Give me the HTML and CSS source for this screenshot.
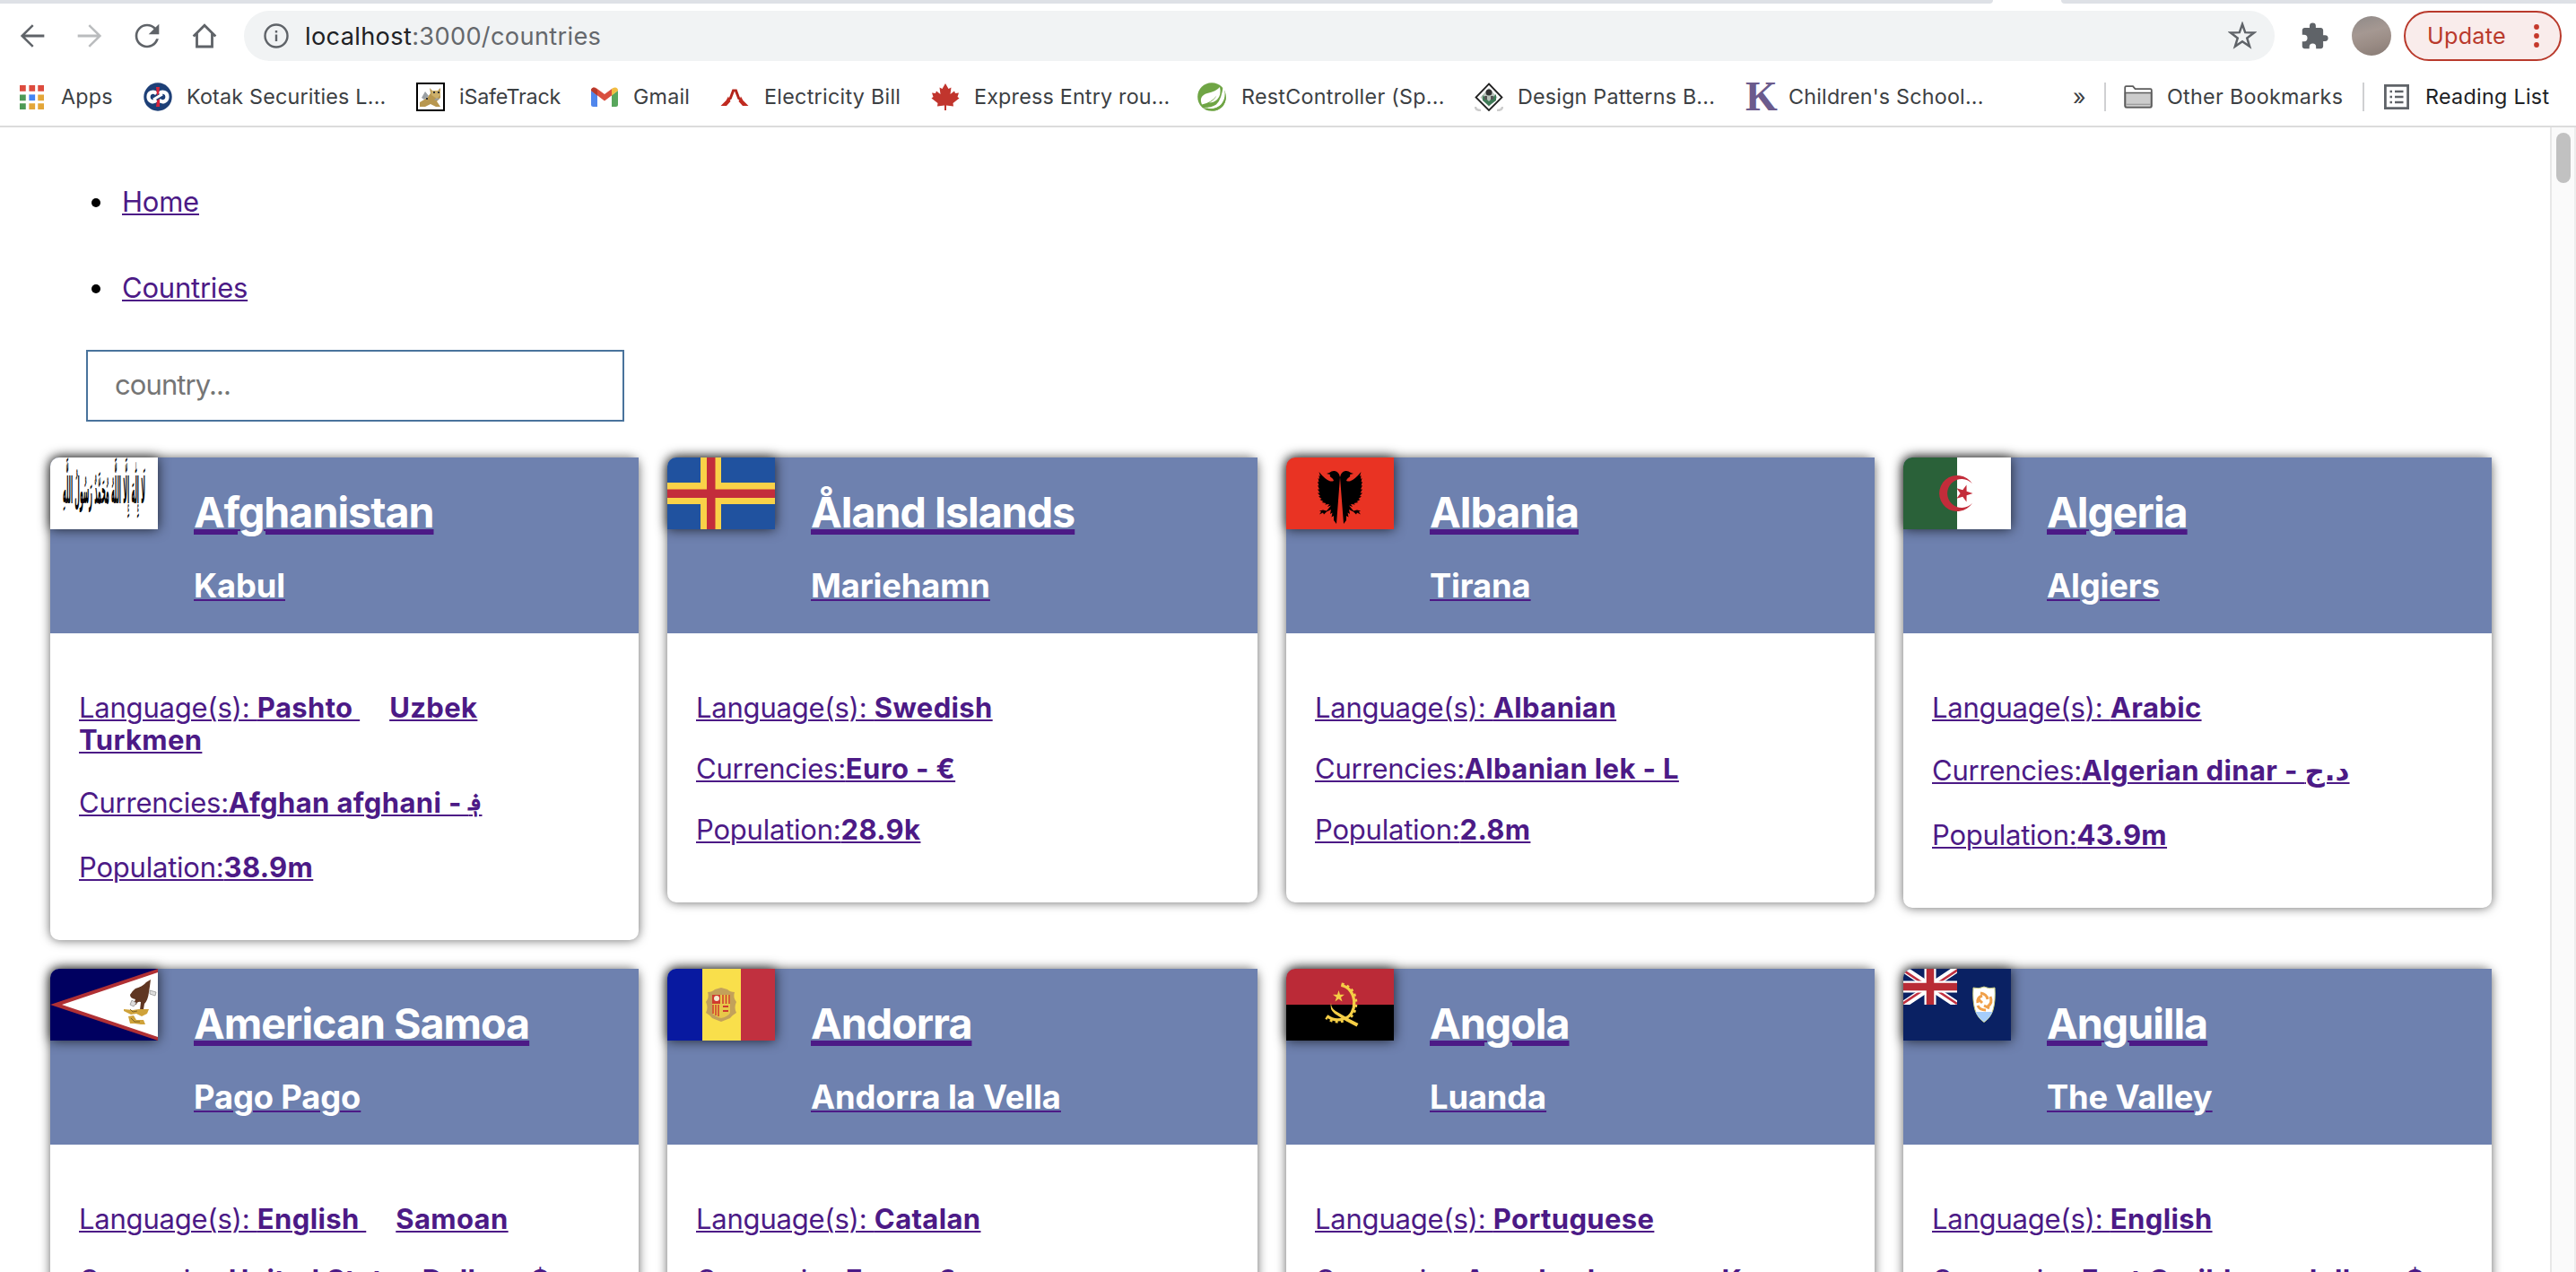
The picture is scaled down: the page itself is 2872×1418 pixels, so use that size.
FILE: index.html
```html
<!DOCTYPE html>
<html lang="en">
<head>
<meta charset="utf-8">
<title>Countries</title>
<link rel="stylesheet" href="styles.css">
</head>
<body>
<header class="browser">
  <div class="tabstrip"><span class="tab-left"></span><span class="tab-right"></span></div>
  <div class="toolbar">
    <svg class="nav-icon" viewBox="0 0 24 24"><path d="M20 11.15H7.2l5.75-5.8L11.9 4.3 4.1 12l7.8 7.7 1.05-1.05-5.75-5.8H20z"/></svg>
    <svg class="nav-icon nav-icon-off" viewBox="0 0 24 24"><path d="M4 11.15h12.8l-5.75-5.8L12.1 4.3l7.8 7.7-7.8 7.7-1.05-1.05 5.75-5.8H4z"/></svg>
    <svg class="nav-icon" viewBox="0 0 24 24"><path d="M17.65 6.35C16.2 4.9 14.21 4 12 4c-4.42 0-7.99 3.58-7.99 8s3.57 8 7.99 8c3.73 0 6.84-2.55 7.73-6h-1.7c-.85 2.6-3.24 4.4-6.03 4.4-3.53 0-6.4-2.87-6.4-6.4S8.470 5.600 12 5.600c1.77 0 3.35.73 4.5 1.9L13 11h7V4z"/></svg>
    <svg class="nav-icon" viewBox="0 0 24 24"><path d="M4.600 12.300 12 4.900l7.400 7.400M6.900 10.500v8.700h10.200v-8.700" fill="none" stroke="#5f6368" stroke-width="1.7"/></svg>
    <div class="omnibox">
      <svg class="info-icon" viewBox="0 0 28 28"><circle cx="14" cy="14" r="12.500" fill="none" stroke="#5f6368" stroke-width="2.400"/><path d="M12.800 12.500h2.400V20h-2.400zM12.800 8h2.400v2.500h-2.400z" fill="#5f6368"/></svg>
      <span class="url">localhost<span class="url-rest">:3000/countries</span></span>
      <svg class="star-icon" viewBox="0 0 30 30"><path d="M15 2.800 18 11.400 27.200 11.700 19.900 17.300 22.600 26.100 15 20.900 7.400 26.100 10.100 17.300 2.800 11.700 12 11.400z" fill="none" stroke="#5f6368" stroke-width="2.300"/></svg>
    </div>
    <svg class="puzzle-icon" viewBox="0 0 24 24"><path d="M20.500 11H19V7c0-1.100-.9-2-2-2h-4V3.500a2.500 2.500 0 0 0-5 0V5H4c-1.100 0-1.990.9-1.990 2v3.800H3.500a2.700 2.700 0 0 1 0 5.400H2V20c0 1.100.9 2 2 2h3.800v-1.500a2.700 2.700 0 0 1 5.400 0V22H17c1.100 0 2-.9 2-2v-4h1.500a2.500 2.500 0 0 0 0-5z" fill="#5f6368"/></svg>
    <span class="avatar"></span>
    <div class="update">Update
      <svg class="dots" viewBox="0 0 6 26"><circle cx="3" cy="3" r="2.900"/><circle cx="3" cy="13" r="2.900"/><circle cx="3" cy="23" r="2.900"/></svg>
    </div>
  </div>
  <div class="bookmarks">
    <div class="bm bm-apps"><svg viewBox="0 0 26 26"><path d="M0 0h6.500v6.500H0zM10 0h6.500v6.500H10zM19.500 0H26v6.500h-6.500z" fill="#dd4b3e"/><path d="M0 10h6.500v6.500H0zM0 19.500h6.500V26H0z" fill="#4e9a56"/><path d="M10 19.500h6.500V26H10zM19.500 10H26v6.500h-6.500zM19.500 19.500H26V26h-6.500z" fill="#e3a639"/><path d="M10 10h6.500v6.500H10z" fill="#4285f4"/></svg><span>Apps</span></div>
    <div class="bm"><svg viewBox="0 0 32 32"><circle cx="16" cy="16" r="15.700" fill="#1d3f77"/><path d="M14.500 12.500C11 9 5.500 11 5.500 16s5.500 7 9 3.500M17.500 12.500C21 9 26.500 11 26.500 16s-5.500 7-9 3.500" fill="none" stroke="#fff" stroke-width="4.200"/><path d="M11 19 21 13" stroke="#fff" stroke-width="3"/><path d="M14 5h4l-.8 7.500-2.200 2zM14 27h4v-9l-3 2z" fill="#d8243c"/></svg><span>Kotak Securities L...</span></div>
    <div class="bm"><svg viewBox="0 0 32 32"><path d="M1 1h30v30H1z" fill="#fff" stroke="#000" stroke-width="2"/><path d="M4 27V22l5-3 4-3 3-4-1-6 3 3h6l3-3v11l-4 4 4 6h-5l-6-3-6 3z" fill="#b8974f"/><path d="M6 17 10 10l4 5-5 4zM20 20l3-4 3 3z" fill="#9a9fa3"/><path d="M17 9h10v5l-4 4-6-4z" fill="#cdb06a"/><path d="M19 11h2M24 11h2M11 18h2" stroke="#333" stroke-width="2"/></svg><span class="tight">iSafeTrack</span></div>
    <div class="bm"><svg viewBox="0 0 32 32"><path d="M1 9v15.500Q1 27 3.500 27H8V14z" fill="#5086ec"/><path d="M24 14v13h4.500Q31 27 31 24.500V9z" fill="#58a65c"/><path d="M1 9q0-3.500 3.500-3.500 1.500 0 3 1.200L16 13l8.500-6.300V14L16 20.500 1 9z" fill="#d94f3f"/><path d="M24 7q1.500-1.500 3.500-1.500Q31 5.500 31 9l-7 5.500z" fill="#f1bd42"/><path d="M1 9q0-3 3-3.500L8 8v6.500z" fill="#b5392c"/></svg><span>Gmail</span></div>
    <div class="bm"><svg viewBox="0 0 32 32"><path d="M8.500 21 13.500 7.500h5L23.500 21l-4-2.500L16 9.500 12.500 18.500z" fill="#b3241b"/><path d="M9 15.500 6.500 20 .5 26h6.500l4.500-5zM23 15.500 25.500 20l6 6H25l-4.500-5z" fill="#c02a20"/></svg><span class="shift">Electricity Bill</span></div>
    <div class="bm"><svg viewBox="0 0 32 32"><path d="M16 1 19.500 7 22.500 5.500 21.500 13 26 9.500 27 12 31 11.500 29.500 16 31.500 17.500 24.500 23 25 26.500 17 25.500V31h-2v-5.500L7 26.500 7.500 23 .5 17.500 2.500 16 1 11.500 5 12 6 9.500 10.500 13 9.500 5.500 12.500 7z" fill="#c1352d"/></svg><span>Express Entry rou...</span></div>
    <div class="bm"><svg viewBox="0 0 32 32"><circle cx="16" cy="16" r="15.800" fill="#6fa545"/><path d="M29 2q4 14-2 22-6 7-17 4.500l-5-.5q10 .5 16-3.500 6-5 8-22.500z" fill="#fff"/><path d="M5 24.500Q1 15 11 12q10-2 14-7 2 9-3 14-4 3.500-9 3.500 6-3 8.500-8-6 8-16.500 10z" fill="#fff"/><path d="M10 28.500q9 2.500 16-3.500 5-6 5.500-12l.3 5q-1 9-9 12.500-7 2.500-12.800-2z" fill="#6fa545"/></svg><span class="shift">RestController (Sp...</span></div>
    <div class="bm"><svg viewBox="0 0 32 32"><path d="M1 27q0 4 6 4M31 27q0 4-6 4" fill="none" stroke="#ccc" stroke-width="2.500"/><path d="M16 1.500 30.500 16.500 16 31 1.500 16.500z" fill="#fff" stroke="#222" stroke-width="1.800"/><path d="M16 6 25.500 16.500 16 27 6.500 16.500z" fill="#b9c3bb"/><path d="M9 14l7 7 8-8v7l-8 6-7-6z" fill="#3f7a57"/><circle cx="16" cy="11" r="3.500" fill="#333"/><path d="M11 15h3v4h-3zM18 15h3v4h-3z" fill="#555"/></svg><span>Design Patterns B...</span></div>
    <div class="bm"><span class="k-icon">K</span><span>Children's School...</span></div>
    <span class="more">»</span>
    <div class="bm bm-folder"><svg viewBox="0 0 32 26"><path d="M1.200 23V2.500q0-1.300 1.300-1.300h7.500l2.500 3h17q1.300 0 1.300 1.300V23q0 1.700-1.700 1.700H2.900q-1.700 0-1.700-1.700z" fill="#fff" stroke="#5c5c5c" stroke-width="1.800"/><path d="M1.500 8.500h29V23q0 1.500-1.500 1.500H3Q1.500 24.500 1.500 23z" fill="#ccc" stroke="#5c5c5c" stroke-width="1.600"/><path d="M2.500 21.300h27" stroke="#999" stroke-width="1.200"/></svg><span>Other Bookmarks</span></div>
    <div class="bm bm-reading"><svg viewBox="0 0 28 28"><path d="M1.400 1.400h25.200v25.200H1.400z" fill="none" stroke="#5f6368" stroke-width="2.800"/><path d="M6.500 8H9M6.500 14H9M6.500 20H9M12 8h9.500M12 14h9.500M12 20h9.500" stroke="#5f6368" stroke-width="2.600"/></svg><span>Reading List</span></div>
  </div>
</header>
<div class="viewport">
<main class="page">
  <ul class="menu">
    <li><a href="#">Home</a></li>
    <li><a href="#">Countries</a></li>
  </ul>
  <input class="search" type="text" placeholder="country...">
  <section class="grid">
    <a class="card" href="#">
      <div class="card-head">
        <svg class="flag" viewBox="0 0 120 80"><path d="M0 0h120v80H0z" fill="#fff"/><g transform="translate(14 51) scale(1 2.300)"><text class="script" x="0" y="0" textLength="92" lengthAdjust="spacingAndGlyphs" direction="rtl" text-anchor="end">لَا إِلَٰهَ إِلَّا اللَّٰهُ مُحَمَّدٌ رَسُولُ اللَّٰهِ</text></g></svg>
        <div><h2>Afghanistan</h2><h3>Kabul</h3></div>
      </div>
      <div class="card-body">
        <p>Language(s): <strong class="lang">Pashto&nbsp;</strong><strong>Uzbek</strong><br><strong>Turkmen</strong></p>
        <p class="tall">Currencies:<strong>Afghan afghani - <span class="afghani">؋</span></strong></p>
        <p>Population:<strong>38.9m</strong></p>
      </div>
    </a>
    <a class="card" href="#">
      <div class="card-head">
        <svg class="flag" viewBox="0 0 120 80"><path d="M0 0h120v80H0z" fill="#20529f"/><path d="M37 0h23v80H37zM0 28h120v24H0z" fill="#f9d248"/><path d="M44 0h9.500v80H44zM0 35.500h120v9.500H0z" fill="#c32d3b"/></svg>
        <div><h2>Åland Islands</h2><h3>Mariehamn</h3></div>
      </div>
      <div class="card-body">
        <p>Language(s): <strong>Swedish</strong></p>
        <p>Currencies:<strong>Euro - €</strong></p>
        <p>Population:<strong>28.9k</strong></p>
      </div>
    </a>
    <a class="card" href="#">
      <div class="card-head">
        <svg class="flag" viewBox="0 0 120 80"><path d="M0 0h120v80H0z" fill="#e93323"/><g id="half"><path d="M60 22q-1-6-6-7-3-.5-6 2l-3 1 4 1q-1 2 1.500 3.500 2 1 2.500 3.500-3 1-5 0-5-2-11.500-10l1.500 5-1.500-1 .5 4-1.500-1 1 4.500-1.500-.5 1.500 4.500-1.500-.5 2 4.500-2 0 2.500 4-2.500 0 3 3.500-2 .5 3.500 2.500-2 1 4 2-2 1 5 1-1.500 1.500 5-.5-2 3 4-1.500-5 6-4-1-4 1 2 1-2 3 4-2 1 2 3-3 5-2.500-1 5 2.500-1.500-1 5 2.500-1.500 0 5 3 4z"/></g><use href="#half" transform="matrix(-1 0 0 1 120 0)"/></svg>
        <div><h2>Albania</h2><h3>Tirana</h3></div>
      </div>
      <div class="card-body">
        <p>Language(s): <strong>Albanian</strong></p>
        <p>Currencies:<strong>Albanian lek - L</strong></p>
        <p>Population:<strong>2.8m</strong></p>
      </div>
    </a>
    <a class="card" href="#">
      <div class="card-head">
        <svg class="flag" viewBox="0 0 120 80"><path d="M0 0h60v80H0z" fill="#2a6139"/><path d="M60 0h60v80H60z" fill="#fff"/><path d="M77 29.300A20 20 0 1 0 77 50.700 16 16 0 1 1 77 29.300z" fill="#c32c3a"/><path d="M77.500 40 70.600 42.300 70.500 49.500 66.200 43.700 59.400 45.800 63.600 40 59.400 34.200 66.200 36.300 70.500 30.500 70.600 37.700z" fill="#c32c3a"/></svg>
        <div><h2>Algeria</h2><h3>Algiers</h3></div>
      </div>
      <div class="card-body">
        <p>Language(s): <strong>Arabic</strong></p>
        <p class="tall">Currencies:<strong>Algerian dinar - <span class="arabic">د.ج</span></strong></p>
        <p>Population:<strong>43.9m</strong></p>
      </div>
    </a>
    <a class="card" href="#">
      <div class="card-head">
        <svg class="flag" viewBox="0 0 120 80"><path d="M0 0h120v80H0z" fill="#000060"/><path d="M0 40 120 0v80z" fill="#b03034"/><path d="M13 40 120 4v72z" fill="#fff"/><path d="M112 12q-1 8-2 14-1 9-5 13l-1 6-4 1 1-9q-4-1-5 3l-3-1 2-5q-6-1-6-5 2-4 6-7 8-2 12-7z" fill="#5f3622"/><path d="M111 24l7 2-1 4-6-2zM91 35l5 3-3 4-4-2z" fill="#ddd" stroke="#888" stroke-width=".7"/><path d="M82 45l10 1 7-1 11 0-2 5-6 3-6-3-6 1-8-4zM87 53l6-1 3 5 8 0 2 5-5 0-7-1-5 0z" fill="#cfa23a"/><path d="M89 45l3 3 5-1M90 55l4 4 6 0" fill="none" stroke="#6d5420" stroke-width=".8"/></svg>
        <div><h2>American Samoa</h2><h3>Pago Pago</h3></div>
      </div>
      <div class="card-body">
        <p>Language(s): <strong class="lang">English&nbsp;</strong><strong>Samoan</strong></p>
        <p>Currencies:<strong>United States Dollar - $</strong></p>
        <p>Population:<strong>55.2k</strong></p>
      </div>
    </a>
    <a class="card" href="#">
      <div class="card-head">
        <svg class="flag" viewBox="0 0 120 80"><path d="M0 0h39v80H0z" fill="#0819a0"/><path d="M39 0h43v80H39z" fill="#f9df4b"/><path d="M82 0h38v80H82z" fill="#c1303f"/><path d="M45 26q5 0 8-3l7-2 7 2q3 3 8 3-2 6 2 11-3 6 0 12-5 3-7 6l-10 4-10-4q-2-3-7-6 3-6 0-12 4-5 2-11z" fill="#c3a15a"/><path d="M50 29h20v20q-2 4-10 6-8-2-10-6z" fill="#e8c84a"/><path d="M50 29h9v10h-9z" fill="#cf3b2e"/><circle cx="55" cy="33" r="3" fill="#f4ead0"/><path d="M62 29v10M65.500 29v10M69 29v10M51 40v10M54 40v12M57 40v13" stroke="#cf3b2e" stroke-width="1.500"/><path d="M62 42h6M62 47h6" stroke="#cf3b2e" stroke-width="2"/></svg>
        <div><h2>Andorra</h2><h3>Andorra la Vella</h3></div>
      </div>
      <div class="card-body">
        <p>Language(s): <strong>Catalan</strong></p>
        <p>Currencies:<strong>Euro - €</strong></p>
        <p>Population:<strong>77.3k</strong></p>
      </div>
    </a>
    <a class="card" href="#">
      <div class="card-head">
        <svg class="flag" viewBox="0 0 120 80"><path d="M0 0h120v40H0z" fill="#bb2a37"/><path d="M0 40h120v40H0z"/><path d="M61.500 18.500C80 22 80 52 64.500 55.500 58 58 51 57 45.500 52.500" fill="none" stroke="#f5ce46" stroke-width="3.200"/><path d="M61.500 17.500C82 21 82 53 65 57 58 59.500 51 59 44.500 54" fill="none" stroke="#f5ce46" stroke-width="4" stroke-dasharray="2.800 3.200"/><path d="M50 38q0 6 5 9 13 8 25.500 14l-2 3.500Q65 58 54 50q-6-5-4-12z" fill="#f5ce46"/><path d="M58.500 24 60 28.700h5l-4 3 1.500 4.800-4-3-4 3 1.500-4.800-4-3h5z" fill="#f5ce46"/></svg>
        <div><h2>Angola</h2><h3>Luanda</h3></div>
      </div>
      <div class="card-body">
        <p>Language(s): <strong>Portuguese</strong></p>
        <p>Currencies:<strong>Angolan kwanza - Kz</strong></p>
        <p>Population:<strong>32.9m</strong></p>
      </div>
    </a>
    <a class="card" href="#">
      <div class="card-head">
        <svg class="flag" viewBox="0 0 120 80"><path d="M0 0h120v80H0z" fill="#0a2163"/><svg width="60" height="40" viewBox="0 0 60 40"><path d="M0 0 60 40M60 0 0 40" stroke="#fff" stroke-width="8"/><path d="M-1 1 30 21.500M29 18.500l31 20.500M61 1 30 21.500M30 18.500-1 39" stroke="#c03040" stroke-width="2.600"/><path d="M30 0v40M0 20h60" stroke="#fff" stroke-width="13"/><path d="M30 0v40M0 20h60" stroke="#b92c36" stroke-width="8.500"/></svg><path d="M78 21q6 2 12-1 6 3 12 1 1 15-2 25-3 9-10 13.500Q83 55 80 46q-3-10-2-25z" fill="#fff" stroke="#c9cc7c" stroke-width="1"/><path d="M80.500 48h19q-3 7-9.500 11-6.500-4-9.500-11z" fill="#a5cdfb"/><path d="M86 27q7 1 8 7M97 31q3 7-3 11M92 46q-7 0-9-5M83 38q-1-6 5-8M96 44l-6-3M84 34l4 4" fill="none" stroke="#f0a04a" stroke-width="3"/></svg>
        <div><h2>Anguilla</h2><h3>The Valley</h3></div>
      </div>
      <div class="card-body">
        <p>Language(s): <strong>English</strong></p>
        <p>Currencies:<strong>East Caribbean dollar - $</strong></p>
        <p>Population:<strong>13.5k</strong></p>
      </div>
    </a>
  </section>
</main>
<div class="scrollbar"><span class="thumb"></span></div>
</div>
</body>
</html>
```
FILE: styles.css
```css
* { box-sizing: border-box; }
body {
  margin: 0;
  height: 1418px;
  overflow: hidden;
  display: flex;
  flex-direction: column;
  background: #fff;
  color: #000;
  font-family: Inter, "Liberation Sans", sans-serif;
}

/* browser chrome */
.browser { flex: none; height: 142px; border-bottom: 2px solid #dcdcdc; background: #fff; }
.tabstrip { height: 4px; display: flex; justify-content: space-between; }
.tab-left { width: 2222px; background: #dee1e6; border-bottom-right-radius: 6px; }
.tab-right { width: 574px; background: #dee1e6; border-bottom-left-radius: 6px; }
.toolbar { height: 72px; padding: 0 16px; display: flex; align-items: center; }
.nav-icon { flex: none; width: 40px; height: 40px; margin-right: 24px; fill: #5f6368; }
.nav-icon-off { fill: #babcbe; }
.omnibox {
  flex: none;
  width: 2264px;
  height: 56px;
  padding: 0 20px 0 22px;
  border-radius: 28px;
  background: #f1f3f4;
  display: flex;
  align-items: center;
}
.info-icon { width: 28px; height: 28px; margin-right: 18px; }
.url { flex: 1; font-size: 27.2px; letter-spacing: .33px; color: #202124; }
.url-rest { color: #65686c; }
.star-icon { width: 32px; height: 32px; }
.puzzle-icon { flex: none; width: 33px; height: 33px; margin: 0 25px 0 28px; }
.avatar {
  flex: none;
  width: 44px;
  height: 44px;
  margin-right: 14px;
  border-radius: 50%;
  background: linear-gradient(165deg, #8f8a88 0%, #a59892 40%, #9b8d86 65%, #877a74 100%);
}
.update {
  width: 176px;
  height: 56px;
  padding: 0 23px 0 24px;
  border: 2px solid #b93a2c;
  border-radius: 28px;
  background: #f9eceb;
  color: #b93a2c;
  font-size: 25.2px;
  letter-spacing: .24px;
  display: flex;
  align-items: center;
  justify-content: space-between;
}
.dots { width: 6px; height: 26px; fill: #c5392b; }

.bookmarks {
  height: 64px;
  padding-left: 22px;
  display: grid;
  grid-template-columns: 138px 304px 194px 145px 235px 297px 309px 302px 365px 35px 288px 1fr;
  align-items: center;
  font-size: 23.3px;
  letter-spacing: .2px;
  color: #3c4043;
}
.bm { display: flex; align-items: center; white-space: nowrap; }
.bm span, .more { margin-top: -1px; }
.bm svg { flex: none; width: 32px; height: 32px; margin-right: 16px; }
.bm-apps svg { width: 27px; height: 27px; margin-right: 19px; }
.tight { letter-spacing: -.19px; }
.bm .shift { margin-left: 1px; letter-spacing: .28px; }
.k-icon {
  width: 32px;
  margin-right: 16px;
  font: bold 46px/32px "Liberation Serif", serif;
  letter-spacing: -2px;
  color: #6b5b8c;
}
.more { font-size: 25px; }
.bm-folder, .bm-reading { height: 32px; border-left: 2px solid #cfd0d2; }
.bm-folder svg { width: 32px; height: 26px; margin-left: 20px; margin-right: 16px; }
.bm-reading svg { width: 28px; height: 28px; margin-left: 22px; margin-right: 18px; }
.bm-folder, .bm-reading { letter-spacing: .3px; }
.bm-reading { color: #202124; }

/* page */
.viewport { flex: 1; min-height: 0; display: flex; overflow: hidden; }
.page { flex: 1; overflow: hidden; font-size: 31px; line-height: 36px; letter-spacing: -.22px; }
.scrollbar {
  width: 29px;
  padding: 6px 4px 0 5px;
  border-left: 2px solid #e7e7e7;
  border-right: 2px solid #ededed;
  background: #fafafa;
}
.thumb { display: block; width: 16px; height: 56px; border-radius: 8px; background: #c1c1c1; }
a { color: #4c1a86; text-decoration: underline 2px; text-underline-offset: 2px; }
.menu { margin: 65px 0 51px; padding-left: 129px; display: flex; flex-direction: column; gap: 60px; }
.menu li { padding-left: 7px; }
.search {
  display: block;
  width: 600px;
  height: 80px;
  margin-left: 96px;
  padding: 0 30px 3px;
  border: 2px solid #49739c;
  background: #fff;
  font: 31px Inter, sans-serif;
  letter-spacing: -.9px;
}
.search::placeholder { color: #757575; }
.grid {
  margin: 40px 64px 0 56px;
  display: grid;
  grid-template-columns: 656px 658px 656px 656px;
  gap: 32px;
  align-items: start;
}
.card { display: block; border-radius: 10px; background: #fff; box-shadow: 0 0 12px rgba(0, 0, 0, .6); }
.card-head {
  height: 196px;
  background: #6e81af;
  border-top-left-radius: 10px;
  display: flex;
  align-items: flex-start;
  gap: 40px;
}
.flag { flex: none; width: 120px; height: 80px; border-top-left-radius: 10px; box-shadow: 0 0 14px rgba(0, 0, 0, .75); }
.script { font: bold 18px "DejaVu Sans", sans-serif; fill: #000; }
.card h2 {
  margin: 33px 0 32px;
  font-size: 46.6px;
  line-height: 56px;
  letter-spacing: -1px;
  text-decoration: underline 4px #4c1a86;
  text-underline-offset: 4px;
}
.card h3 {
  margin: 0;
  font-size: 36.3px;
  line-height: 44px;
  letter-spacing: -.12px;
  text-decoration: underline 2px #4c1a86;
  text-underline-offset: 2px;
}
.card h2, .card h3 { width: fit-content; color: #fff; }
.card-body { padding: 65px 32px 63px; }
.card p { margin: 0 0 32px; }
.card p:last-child { margin: 0; }
.card p.tall { height: 42px; padding-top: 2px; }
.card strong { letter-spacing: .36px; }
.lang { margin-right: 33px; }
.arabic { font-family: "DejaVu Sans", sans-serif; font-size: 31px; line-height: 0; letter-spacing: 0; }
.afghani { font-family: "DejaVu Sans", sans-serif; font-size: 26px; line-height: 0; letter-spacing: 0; vertical-align: 3px; }
```
